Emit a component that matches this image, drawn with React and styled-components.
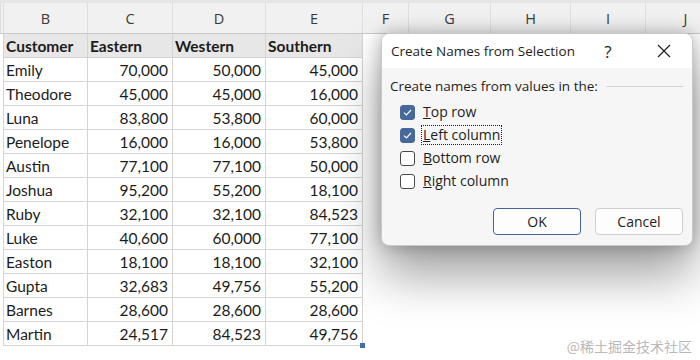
import React from "react";
import styled, { createGlobalStyle } from "styled-components";

const GlobalStyle = createGlobalStyle`
  html, body {
    margin: 0;
    padding: 0;
    background: #ffffff;
  }
  body {
    width: 700px;
    height: 360px;
    overflow: hidden;
    font-family: Lato, "Liberation Sans", sans-serif;
  }
`;

const COLS = "3px 84px 85px 93px 97px 46px 82px 80px 75px 80px";

const Page = styled.div`
  position: relative;
  width: 700px;
  height: 360px;
  overflow: hidden;
  background: #ffffff;
`;

const ColumnBar = styled.div`
  display: grid;
  grid-template-columns: ${COLS};
  height: 34px;
  box-sizing: border-box;
  background: #f1f1f1;
  border-top: 3px solid #e6e6e6;
  border-bottom: 1px solid #c9c9c9;
`;

const ColumnLetter = styled.div`
  display: flex;
  align-items: center;
  justify-content: center;
  font-family: "Open Sans", "Liberation Sans", sans-serif;
  font-size: 14.5px;
  color: #3a3a3a;
  border-left: 1px solid #dedede;
`;

const Table = styled.div`
  display: grid;
  grid-template-columns: 84px 85px 93px 97px;
  margin-left: 3px;
  width: max-content;
  border-left: 1px solid #d4d4d4;
`;

const Cell = styled.div`
  height: 24px;
  box-sizing: border-box;
  display: flex;
  align-items: center;
  justify-content: ${(p) => (p.$num ? "flex-end" : "flex-start")};
  padding: ${(p) => (p.$num ? "0 4px 0 0" : "0 0 0 2px")};
  border-right: 1px solid #d4d4d4;
  border-bottom: 1px solid #d4d4d4;
  background: ${(p) => (p.$head ? "#e7e7e7" : "#ffffff")};
  font-size: 15.5px;
  font-weight: ${(p) => (p.$head ? 700 : 400)};
  color: #1c1c1c;
  position: relative;
`;

const FillHandle = styled.span`
  position: absolute;
  right: -3px;
  bottom: -3px;
  width: 5px;
  height: 5px;
  background: #3c6fb4;
`;

const Dialog = styled.div`
  position: absolute;
  left: 381px;
  top: 33px;
  width: 312px;
  height: 213px;
  border-radius: 8px;
  background: #f6f6f6;
  border: 1px solid #cacaca;
  box-sizing: border-box;
  box-shadow: 0 30px 48px rgba(0, 0, 0, 0.36), 0 0 18px rgba(0, 0, 0, 0.28);
  display: flex;
  flex-direction: column;
  overflow: hidden;
  font-family: "Open Sans", "Noto Sans", sans-serif;
  color: #1e1e1e;
`;

const TitleBar = styled.div`
  height: 34px;
  background: #ffffff;
  display: flex;
  align-items: center;
  padding: 0 0 0 9px;
  font-size: 13.5px;
`;

const TitleText = styled.div`
  flex: 1;
  white-space: nowrap;
`;

const TitleButton = styled.div`
  width: 56px;
  display: flex;
  justify-content: center;
  align-items: center;
  font-size: 17px;
`;

const Body = styled.div`
  flex: 1;
  display: flex;
  flex-direction: column;
  padding: 8px 9px 10px 8px;
`;

const GroupLabel = styled.div`
  display: flex;
  align-items: center;
  gap: 8px;
  font-size: 13.5px;
  height: 20px;
  white-space: nowrap;
  &::after {
    content: "";
    flex: 1;
    height: 1px;
    background: #d2d2d2;
  }
`;

const Options = styled.div`
  display: flex;
  flex-direction: column;
  gap: 3px;
  padding: 6px 0 0 10px;
`;

const Option = styled.label`
  display: flex;
  align-items: center;
  gap: 6px;
  height: 20px;
  font-size: 14px;
`;

const Box = styled.span`
  width: 15px;
  height: 15px;
  box-sizing: border-box;
  border-radius: 3px;
  display: flex;
  align-items: center;
  justify-content: center;
  background: ${(p) => (p.$on ? "#46699d" : "#ffffff")};
  border: 1px solid ${(p) => (p.$on ? "#46699d" : "#4a4a4a")};
`;

const OptionText = styled.span`
  padding: 0 1px;
  border: 1px ${(p) => (p.$focus ? "dotted #222" : "solid transparent")};
  line-height: 18px;
`;

const Buttons = styled.div`
  margin-top: auto;
  display: flex;
  justify-content: flex-end;
  gap: 14px;
`;

const Button = styled.button`
  width: 88px;
  height: 27px;
  border-radius: 4px;
  background: #fdfdfd;
  border: 1px solid ${(p) => (p.$primary ? "#44659a" : "#cfcfcf")};
  font-family: "Open Sans", "Noto Sans", sans-serif;
  font-size: 14px;
  color: #1e1e1e;
  padding: 0;
`;

const Watermark = styled.div`
  position: absolute;
  right: 8px;
  bottom: 4px;
  font-family: "Noto Sans CJK SC", sans-serif;
  font-size: 14px;
  color: #b9b9b9;
`;

const letters = ["", "B", "C", "D", "E", "F", "G", "H", "I", "J"];

const rows = [
  ["Emily", "70,000", "50,000", "45,000"],
  ["Theodore", "45,000", "45,000", "16,000"],
  ["Luna", "83,800", "53,800", "60,000"],
  ["Penelope", "16,000", "16,000", "53,800"],
  ["Austin", "77,100", "77,100", "50,000"],
  ["Joshua", "95,200", "55,200", "18,100"],
  ["Ruby", "32,100", "32,100", "84,523"],
  ["Luke", "40,600", "60,000", "77,100"],
  ["Easton", "18,100", "18,100", "32,100"],
  ["Gupta", "32,683", "49,756", "55,200"],
  ["Barnes", "28,600", "28,600", "28,600"],
  ["Martin", "24,517", "84,523", "49,756"],
];

const options = [
  { key: "T", rest: "op row", on: true },
  { key: "L", rest: "eft column", on: true, focus: true },
  { key: "B", rest: "ottom row", on: false },
  { key: "R", rest: "ight column", on: false },
];

const Check = () => (
  <svg width="9" height="7" viewBox="0 0 9 7">
    <path d="M1 3.6 L3.4 6 L8 1" fill="none" stroke="#ffffff" strokeWidth="1.2" />
  </svg>
);

const Close = () => (
  <svg width="14" height="14" viewBox="0 0 14 14">
    <path d="M1 1 L13 13 M13 1 L1 13" stroke="#1e1e1e" strokeWidth="1.2" />
  </svg>
);

export default function App() {
  return (
    <Page>
      <GlobalStyle />
      <ColumnBar>
        {letters.map((l, i) => (
          <ColumnLetter key={i}>{l}</ColumnLetter>
        ))}
      </ColumnBar>
      <Table>
        {["Customer", "Eastern", "Western", "Southern"].map((h) => (
          <Cell key={h} $head>
            {h}
          </Cell>
        ))}
        {rows.map((r, ri) =>
          r.map((v, ci) => (
            <Cell key={ri + "-" + ci} $num={ci > 0}>
              {v}
              {ri === rows.length - 1 && ci === 3 && <FillHandle />}
            </Cell>
          ))
        )}
      </Table>
      <Dialog>
        <TitleBar>
          <TitleText>Create Names from Selection</TitleText>
          <TitleButton>?</TitleButton>
          <TitleButton>
            <Close />
          </TitleButton>
        </TitleBar>
        <Body>
          <GroupLabel>Create names from values in the:</GroupLabel>
          <Options>
            {options.map((o) => (
              <Option key={o.key}>
                <Box $on={o.on}>{o.on && <Check />}</Box>
                <OptionText $focus={o.focus}>
                  <u>{o.key}</u>
                  {o.rest}
                </OptionText>
              </Option>
            ))}
          </Options>
          <Buttons>
            <Button $primary>OK</Button>
            <Button>Cancel</Button>
          </Buttons>
        </Body>
      </Dialog>
      <Watermark>@稀土掘金技术社区</Watermark>
    </Page>
  );
}
